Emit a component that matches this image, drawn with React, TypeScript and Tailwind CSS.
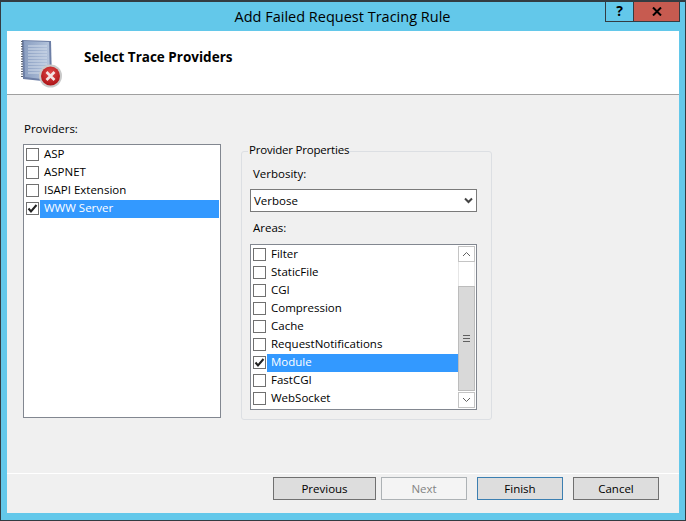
import React from 'react';

const providers = ['ASP', 'ASPNET', 'ISAPI Extension', 'WWW Server'];
const areas = ['Filter', 'StaticFile', 'CGI', 'Compression', 'Cache', 'RequestNotifications', 'Module', 'FastCGI', 'WebSocket'];

function CheckRow({ label, checked }: { label: string; checked: boolean }) {
  return (
    <div className="flex h-[18px] items-start">
      <div className="ml-px mr-px mt-[2px] flex h-[13px] w-[13px] shrink-0 items-center justify-center border border-[#707070] bg-white">
        {checked && (
          <svg width="11" height="11" viewBox="0 0 11 11">
            <path d="M1.5 5.5 L4 8.5 L9.5 2" fill="none" stroke="#222222" strokeWidth="2" />
          </svg>
        )}
      </div>
      <div className={`h-full flex-1 pl-1 text-[11.5px] leading-[15px] ${checked ? 'bg-[#3399ff] text-white' : 'text-black'}`}>
        {label}
      </div>
    </div>
  );
}

function WizardButton({ label, className }: { label: string; className: string }) {
  return (
    <div className={`flex h-[23px] items-center justify-center border text-[11.5px] ${className}`}>{label}</div>
  );
}

function NotebookIcon() {
  return (
    <svg width="44" height="50" viewBox="0 0 44 50" className="shrink-0">
      <defs>
        <linearGradient id="cover" x1="0" y1="0" x2="1" y2="0">
          <stop offset="0" stopColor="#8b9fc2" />
          <stop offset="1" stopColor="#b4c4dc" />
        </linearGradient>
        <radialGradient id="badge" cx="0.5" cy="0.35" r="0.7">
          <stop offset="0" stopColor="#e24a4a" />
          <stop offset="1" stopColor="#a80f12" />
        </radialGradient>
      </defs>
      <path d="M2 1 L31 2 L32 43 L3 40 Z" fill="#6d7fa6" />
      <path d="M4 2 L29 3 L30 41 L5 38 Z" fill="url(#cover)" />
      <path d="M8 7H27M8 10H27M8 13H27M8 16H27M8 19H27M8 22H27M8 25H27M8 28H27M8 31H27M8 34H27" stroke="#d2dcea" strokeWidth="1" />
      <path d="M2 2V39" stroke="#5a6170" strokeWidth="2" strokeDasharray="1 1.5" />
      <circle cx="30.5" cy="37" r="11.5" fill="#c9c9c9" />
      <circle cx="30.5" cy="37" r="9.5" fill="url(#badge)" />
      <path d="M26.5 33 L34.5 41 M34.5 33 L26.5 41" stroke="#f4e4e4" strokeWidth="2.6" />
    </svg>
  );
}

export default function App() {
  return (
    <div className="flex h-[521px] w-[686px] flex-col overflow-hidden border border-t-2 border-[#333c42] border-r-[#333c42] bg-[#63c8ea] font-['Open_Sans','Liberation_Sans',sans-serif] text-black">
      {/* Title bar */}
      <div className="relative flex h-[29px] shrink-0 items-center justify-center pr-[1px] text-[14.5px]">
        Add Failed Request Tracing Rule
        <div className="absolute right-[5px] top-[-2px] flex h-[22px] border border-[#333c42]">
          <div className="flex w-[27px] items-center justify-center text-sm font-bold">?</div>
          <div className="flex w-[46px] items-center justify-center border-l border-[#333c42] bg-[#c75b50]">
            <svg width="10" height="9" viewBox="0 0 10 9">
              <path d="M1 0.5 L9 8.5 M9 0.5 L1 8.5" stroke="#000000" strokeWidth="2" />
            </svg>
          </div>
        </div>
      </div>

      <div className="mx-[6px] flex h-[482px] flex-col bg-[#f0f0f0]">
        {/* Header */}
        <div className="flex h-[64px] shrink-0 items-center border-b border-[#a0a0a0] bg-white pl-[13px]">
          <div className="mt-[2px]">
            <NotebookIcon />
          </div>
          <div className="mb-[10px] ml-5 text-[13.5px] font-bold">Select Trace Providers</div>
        </div>

        {/* Body */}
        <div className="flex h-[378px] shrink-0 pl-4 pt-[26px]">
          <div className="w-[198px]">
            <div className="ml-px h-4 text-[11.5px] leading-[15px]">Providers:</div>
            <div className="mt-[7px] h-[274px] border border-[#828790] bg-white p-px">
              {providers.map((p) => (
                <CheckRow key={p} label={p} checked={p === 'WWW Server'} />
              ))}
            </div>
          </div>

          <div className="relative ml-5 mt-[30px] h-[269px] w-[251px] rounded-[3px] border border-[#dcdfe3] pl-2 pt-[14px]">
            <div className="absolute left-[6px] top-[-10px] bg-[#f0f0f0] px-px text-[11.5px] leading-4 tracking-[-0.2px]">Provider Properties</div>
            <div className="ml-[3px] h-4 text-[11.5px] leading-[15px]">Verbosity:</div>
            <div className="mt-[7px] flex h-[23px] w-[227px] items-center justify-between border border-[#7a7a7a] bg-white pl-[3px] pr-[3px] text-[11.5px]">
              Verbose
              <svg width="9" height="7" viewBox="0 0 9 7">
                <path d="M1 1.5 L4.5 5 L8 1.5" fill="none" stroke="#444444" strokeWidth="2" />
              </svg>
            </div>
            <div className="ml-[3px] mt-2 h-4 text-[11.5px] leading-[15px]">Areas:</div>
            <div className="mt-2 flex h-[166px] w-[227px] border border-[#828790] bg-white pl-px pt-px">
              <div className="w-[206px]">
                {areas.map((a) => (
                  <CheckRow key={a} label={a} checked={a === 'Module'} />
                ))}
              </div>
              {/* Scrollbar */}
              <div className="flex h-[162px] w-[17px] flex-col">
                <div className="flex h-[16px] items-center justify-center border border-[#c4c4c4]">
                  <svg width="9" height="6" viewBox="0 0 9 6">
                    <path d="M1 5 L4.5 1.5 L8 5" fill="none" stroke="#606060" strokeWidth="1" />
                  </svg>
                </div>
                <div className="h-6 border-x border-[#e6e6e6]" />
                <div className="flex h-[105px] items-center justify-center border border-[#bcbcbc] bg-[#d9d9d9]">
                  <div className="h-[7px] w-[7px] border-y border-[#606060] bg-[linear-gradient(#d9d9d9_0_2px,#606060_2px_3px,#d9d9d9_3px)]" />
                </div>
                <div className="mt-px flex h-[16px] items-center justify-center border border-[#c4c4c4]">
                  <svg width="9" height="6" viewBox="0 0 9 6">
                    <path d="M1 1 L4.5 4.5 L8 1" fill="none" stroke="#606060" strokeWidth="1" />
                  </svg>
                </div>
              </div>
            </div>
          </div>
        </div>

        {/* Footer */}
        <div className="flex flex-1 border-t border-white pl-[266px] pt-[3px]">
          <WizardButton label="Previous" className="w-[103px] border-[#707070] bg-[#dddddd]" />
          <WizardButton label="Next" className="ml-[5px] w-[86px] border-[#adb2b5] bg-[#f4f4f4] text-[#838383]" />
          <WizardButton label="Finish" className="ml-[10px] w-[86px] border-[#3c7fb1] bg-[#dddddd]" />
          <WizardButton label="Cancel" className="ml-[10px] w-[86px] border-[#707070] bg-[#dddddd]" />
        </div>
      </div>
    </div>
  );
}
